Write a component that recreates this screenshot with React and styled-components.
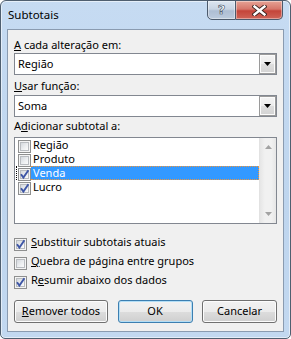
import React from 'react';
import styled, { createGlobalStyle } from 'styled-components';

const Global = createGlobalStyle`
  html, body { margin: 0; padding: 0; background: #ffffff; }
  body {
    width: 291px; height: 339px; overflow: hidden;
    font-family: "Noto Sans", "Open Sans", sans-serif;
    font-size: 11px; color: #000;
  }
  * { box-sizing: border-box; }
`;

const Window = styled.div`
  width: 291px;
  height: 339px;
  display: flex;
  flex-direction: column;
  border: 1px solid #4f5f70;
  border-radius: 6px 6px 5px 5px;
  background: linear-gradient(to bottom, #c6dbf2 0%, #bed5ee 60%, #c2d8f0 100%);
  box-shadow: inset 0 0 0 1px rgba(255, 255, 255, 0.55);
`;

const TitleBar = styled.div`
  height: 28px;
  display: flex;
  align-items: flex-start;
  padding-left: 7px;
`;

const Title = styled.div`
  padding-top: 6px;
  line-height: 16px;
  font-size: 11.5px;
  flex: 1;
`;

const CaptionGroup = styled.div`
  display: flex;
  margin-top: -1px;
  margin-right: 7px;
`;

const CaptionButton = styled.div`
  height: 20px;
  width: ${p => p.$w}px;
  display: flex;
  align-items: center;
  justify-content: center;
  border: 1px solid #4c5a6c;
  border-left-width: ${p => (p.$close ? 0 : 1)}px;
  border-radius: ${p => (p.$close ? '0 0 5px 0' : '0 0 0 5px')};
  background: ${p =>
    p.$close
      ? 'linear-gradient(to bottom, #e6a395 0%, #d6766a 45%, #c4453a 55%, #cf6457 100%)'
      : 'linear-gradient(to bottom, #dce5f0 0%, #c8d4e3 45%, #aebed3 55%, #bccbdd 100%)'};
  box-shadow: inset 0 0 0 1px rgba(255, 255, 255, 0.4);
`;

const HelpGlyph = styled.span`
  font-family: "DejaVu Sans", sans-serif;
  font-weight: bold;
  font-size: 13px;
  line-height: 13px;
  color: #ffffff;
  -webkit-text-stroke: 0.6px #3c4a5c;
  margin-top: -1px;
`;

const Client = styled.div`
  flex: 1;
  margin: 0 6px 6px 6px;
  border: 1px solid #8a9bb0;
  background: #f0f0f0;
  display: flex;
  flex-direction: column;
  padding: 7px 6px 0 6px;
`;

const FieldLabel = styled.div`
  line-height: 16px;
  height: 16px;
  margin-top: ${p => p.$mt || 0}px;
  white-space: nowrap;
`;

const Acc = styled.span`
  text-decoration: underline;
  text-underline-offset: 1px;
`;

const Select = styled.div`
  height: 22px;
  margin-top: ${p => p.$mt || 0}px;
  border: 1px solid #828790;
  background: #ffffff;
  display: flex;
  align-items: stretch;
`;

const SelectValue = styled.div`
  flex: 1;
  padding-left: 3px;
  line-height: 20px;
`;

const DropButton = styled.div`
  width: 17px;
  border: 1px solid #9a9a9a;
  background: linear-gradient(to bottom, #f4f4f4 0%, #ececec 50%, #dedede 50%, #d3d3d3 100%);
  box-shadow: inset 0 0 0 1px #fbfbfb;
  display: flex;
  align-items: center;
  justify-content: center;
`;

const ListBox = styled.div`
  height: 87px;
  margin-top: 3px;
  border: 1px solid #828790;
  background: #ffffff;
  display: flex;
`;

const ListItems = styled.div`
  flex: 1;
  display: flex;
  flex-direction: column;
`;

const ListRow = styled.div`
  height: 14px;
  display: flex;
  margin-left: 1px;
`;

const CheckCell = styled.div`
  width: 15px;
  height: 14px;
  padding-left: 1px;
  border: 1px dotted ${p => (p.$focus ? '#000' : 'transparent')};
  border-right: 0;
  display: flex;
  align-items: flex-start;
`;

const ItemLabel = styled.div`
  flex: 1;
  height: 14px;
  line-height: 12px;
  padding-left: 2px;
  border: 1px dotted ${p => (p.$focus ? '#f0963a' : 'transparent')};
  border-left: 0;
  background: ${p => (p.$selected ? '#3399ff' : 'transparent')};
  color: ${p => (p.$selected ? '#ffffff' : '#000')};
  white-space: nowrap;
`;

const ScrollBar = styled.div`
  width: 17px;
  background: linear-gradient(to right, #e6e6e6 0%, #f1f1f1 30%, #f1f1f1 70%, #e6e6e6 100%);
  border-left: 1px solid #e2e2e2;
  display: flex;
  flex-direction: column;
  justify-content: space-between;
  align-items: center;
  padding: 7px 0 7px 0;
`;

const BoxOuter = styled.span`
  flex: none;
  width: 13px;
  height: 13px;
  margin-top: ${p => p.$mt || 0}px;
  border: 1px solid #8e8f8f;
  background: #f4f4f4;
  padding: 1px;
  position: relative;
  display: block;
`;

const BoxInner = styled.span`
  display: block;
  width: 9px;
  height: 9px;
  border: 1px solid #b9bcc0;
  background: linear-gradient(135deg, #d4d8dd 0%, #eceef0 55%, #fbfbfb 100%);
`;

const CheckSvg = styled.svg`
  position: absolute;
  left: -1px;
  top: -1px;
  overflow: visible;
`;

const Checkbox = ({ checked, mt }) => (
  <BoxOuter $mt={mt}>
    <BoxInner />
    {checked && (
      <CheckSvg width="13" height="13" viewBox="0 0 13 13">
        <path d="M3 6.2 L5.4 9.6 L10.4 2.2" fill="none" stroke="#3e56a6" strokeWidth="1.9" strokeLinejoin="miter" />
      </CheckSvg>
    )}
  </BoxOuter>
);

const OptionRow = styled.div`
  height: 16px;
  margin-top: ${p => p.$mt}px;
  display: flex;
  align-items: flex-start;
  line-height: 16px;
  white-space: nowrap;
`;

const OptionText = styled.span`
  margin-left: 4px;
`;

const ButtonRow = styled.div`
  margin-top: 12px;
  display: flex;
  justify-content: space-between;
`;

const PushButton = styled.div`
  width: ${p => p.$w}px;
  height: 23px;
  border: 1px solid ${p => (p.$default ? '#3c7fb1' : '#707070')};
  border-radius: 3px;
  background: linear-gradient(to bottom, #f2f2f2 0%, #ebebeb 50%, #dddddd 50%, #cfcfcf 100%);
  box-shadow: inset 0 0 0 1px ${p => (p.$default ? '#b3def6' : '#fcfcfc')};
  display: flex;
  align-items: center;
  justify-content: center;
  line-height: 16px;
  padding-bottom: 1px;
`;

const Arrow = ({ up, color = '#000', w = 7, h = 4 }) => (
  <svg width={w} height={h} viewBox={`0 0 ${w} ${h}`}>
    <path d={up ? `M0 ${h} L${w / 2} 0 L${w} ${h} Z` : `M0 0 L${w} 0 L${w / 2} ${h} Z`} fill={color} />
  </svg>
);

const items = [
  { label: 'Região', checked: false },
  { label: 'Produto', checked: false },
  { label: 'Venda', checked: true, selected: true },
  { label: 'Lucro', checked: true },
];

export default function App() {
  return (
    <>
      <Global />
      <Window>
        <TitleBar>
          <Title>Subtotais</Title>
          <CaptionGroup>
            <CaptionButton $w={29}>
              <HelpGlyph>?</HelpGlyph>
            </CaptionButton>
            <CaptionButton $w={47} $close>
              <svg width="15" height="11" viewBox="0 0 15 11">
                <path d="M2.5 1.5 L12.5 9.5 M12.5 1.5 L2.5 9.5" stroke="#3b2420" strokeWidth="4.2" strokeLinecap="square" />
                <path d="M2.5 1.5 L12.5 9.5 M12.5 1.5 L2.5 9.5" stroke="#ffffff" strokeWidth="2.4" strokeLinecap="square" />
              </svg>
            </CaptionButton>
          </CaptionGroup>
        </TitleBar>
        <Client>
          <FieldLabel>
            <Acc>A</Acc> cada alteração em:
          </FieldLabel>
          <Select>
            <SelectValue>Região</SelectValue>
            <DropButton>
              <Arrow />
            </DropButton>
          </Select>
          <FieldLabel $mt={3}>
            <Acc>U</Acc>sar função:
          </FieldLabel>
          <Select $mt={1}>
            <SelectValue>Soma</SelectValue>
            <DropButton>
              <Arrow />
            </DropButton>
          </Select>
          <FieldLabel $mt={1}>
            A<Acc>d</Acc>icionar subtotal a:
          </FieldLabel>
          <ListBox>
            <ListItems>
              {items.map(it => (
                <ListRow key={it.label}>
                  <CheckCell $focus={it.selected}>
                    <Checkbox checked={it.checked} mt={1} />
                  </CheckCell>
                  <ItemLabel $focus={it.selected} $selected={it.selected}>
                    {it.label}
                  </ItemLabel>
                </ListRow>
              ))}
            </ListItems>
            <ScrollBar>
              <Arrow up color="#a3a3a3" />
              <Arrow color="#a3a3a3" />
            </ScrollBar>
          </ListBox>
          <OptionRow $mt={10}>
            <Checkbox checked mt={4} />
            <OptionText>
              <Acc>S</Acc>ubstituir subtotais atuais
            </OptionText>
          </OptionRow>
          <OptionRow $mt={3}>
            <Checkbox mt={4} />
            <OptionText>
              <Acc>Q</Acc>uebra de página entre grupos
            </OptionText>
          </OptionRow>
          <OptionRow $mt={3}>
            <Checkbox checked mt={4} />
            <OptionText>
              R<Acc>e</Acc>sumir abaixo dos dados
            </OptionText>
          </OptionRow>
          <ButtonRow>
            <PushButton $w={94}>
              <span>
                <Acc>R</Acc>emover todos
              </span>
            </PushButton>
            <PushButton $w={75} $default>
              OK
            </PushButton>
            <PushButton $w={75}>Cancelar</PushButton>
          </ButtonRow>
        </Client>
      </Window>
    </>
  );
}
